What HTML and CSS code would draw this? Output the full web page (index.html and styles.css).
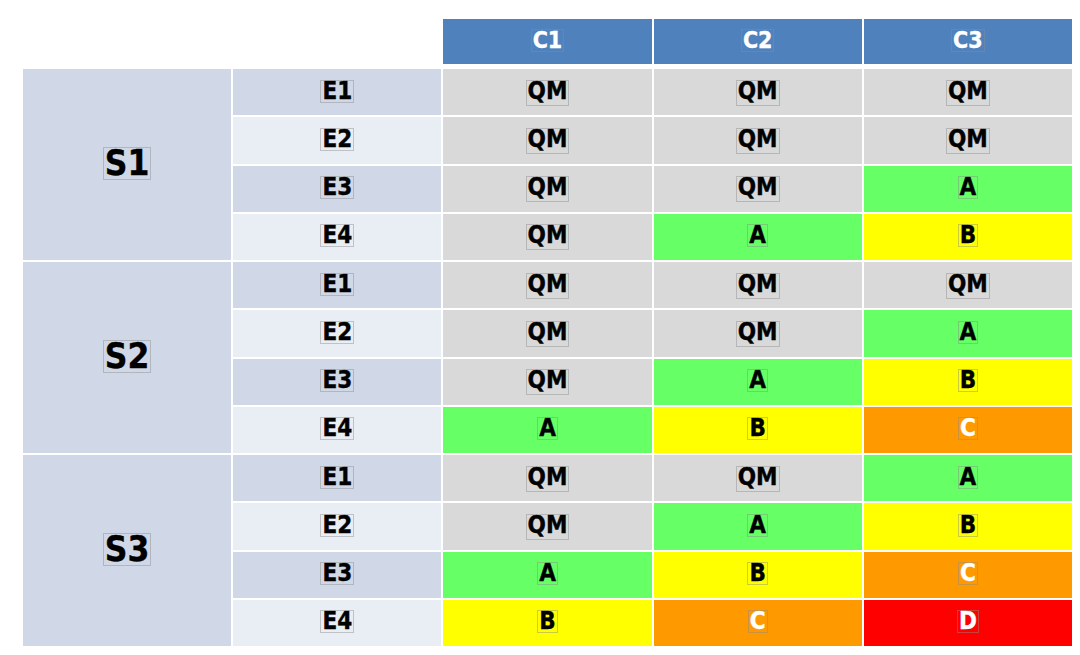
FILE: index.html
```html
<!DOCTYPE html>
<html>
<head>
<meta charset="utf-8">
<link rel="stylesheet" href="styles.css">
</head>
<body>
<div class="page">
  <div class="head">
    <div class="blank"></div>
    <div class="blank"></div>
    <div class="hc"><span class="t">C1</span></div>
    <div class="hc"><span class="t">C2</span></div>
    <div class="hc"><span class="t">C3</span></div>
  </div>
  <div class="grid">
    <div class="s"><span class="t">S1</span></div>
    <div class="e dk"><span class="t">E1</span></div>
    <div class="c qm"><span class="t q">QM</span></div>
    <div class="c qm"><span class="t q">QM</span></div>
    <div class="c qm"><span class="t q">QM</span></div>
    <div class="e lt"><span class="t">E2</span></div>
    <div class="c qm"><span class="t q">QM</span></div>
    <div class="c qm"><span class="t q">QM</span></div>
    <div class="c qm"><span class="t q">QM</span></div>
    <div class="e dk"><span class="t">E3</span></div>
    <div class="c qm"><span class="t q">QM</span></div>
    <div class="c qm"><span class="t q">QM</span></div>
    <div class="c ga"><span class="t">A</span></div>
    <div class="e lt"><span class="t">E4</span></div>
    <div class="c qm"><span class="t q">QM</span></div>
    <div class="c ga"><span class="t">A</span></div>
    <div class="c gb"><span class="t">B</span></div>

    <div class="s"><span class="t">S2</span></div>
    <div class="e dk"><span class="t">E1</span></div>
    <div class="c qm"><span class="t q">QM</span></div>
    <div class="c qm"><span class="t q">QM</span></div>
    <div class="c qm"><span class="t q">QM</span></div>
    <div class="e lt"><span class="t">E2</span></div>
    <div class="c qm"><span class="t q">QM</span></div>
    <div class="c qm"><span class="t q">QM</span></div>
    <div class="c ga"><span class="t">A</span></div>
    <div class="e dk"><span class="t">E3</span></div>
    <div class="c qm"><span class="t q">QM</span></div>
    <div class="c ga"><span class="t">A</span></div>
    <div class="c gb"><span class="t">B</span></div>
    <div class="e lt"><span class="t">E4</span></div>
    <div class="c ga"><span class="t">A</span></div>
    <div class="c gb"><span class="t">B</span></div>
    <div class="c gc"><span class="t">C</span></div>

    <div class="s"><span class="t">S3</span></div>
    <div class="e dk"><span class="t">E1</span></div>
    <div class="c qm"><span class="t q">QM</span></div>
    <div class="c qm"><span class="t q">QM</span></div>
    <div class="c ga"><span class="t">A</span></div>
    <div class="e lt"><span class="t">E2</span></div>
    <div class="c qm"><span class="t q">QM</span></div>
    <div class="c ga"><span class="t">A</span></div>
    <div class="c gb"><span class="t">B</span></div>
    <div class="e dk"><span class="t">E3</span></div>
    <div class="c ga"><span class="t">A</span></div>
    <div class="c gb"><span class="t">B</span></div>
    <div class="c gc"><span class="t">C</span></div>
    <div class="e lt"><span class="t">E4</span></div>
    <div class="c gb"><span class="t">B</span></div>
    <div class="c gc"><span class="t">C</span></div>
    <div class="c gd"><span class="t">D</span></div>
  </div>
</div>
</body>
</html>
```
FILE: styles.css
```css
html, body {
  margin: 0;
  padding: 0;
  background: #ffffff;
}

.page {
  padding: 19px 0 0 23px;
  font-family: "DejaVu Sans Condensed", "DejaVu Sans", Verdana, sans-serif;
  font-stretch: condensed;
  font-weight: bold;
  font-size: 24px;
  color: #000000;
}

.head,
.grid {
  width: 1049px;
  display: grid;
  grid-template-columns: repeat(5, 1fr);
  column-gap: 2px;
}

.head {
  height: 45px;
  margin-bottom: 5px;
}

.grid {
  height: 577px;
  grid-template-rows: repeat(12, 1fr);
  row-gap: 2px;
}

.head > div,
.grid > div {
  display: flex;
  align-items: center;
  justify-content: center;
}

.hc {
  background: #4f81bd;
  color: #ffffff;
  font-size: 23px;
}

.s {
  grid-row: span 4;
  background: #d0d8e8;
  font-size: 35px;
}

.e.dk { background: #d0d8e8; }
.e.lt { background: #e9edf4; }

.qm { background: #d9d9d9; }
.ga { background: #66ff66; }
.gb { background: #ffff00; }
.gc { background: #ff9900; color: #ffffff; }
.gd { background: #ff0000; color: #ffffff; }

.t {
  display: inline-block;
  line-height: 0.875em;
  height: 0.875em;
  padding: 0 1px;
  margin-bottom: 2px;
  outline: 1px solid rgba(140, 140, 140, 0.45);
  -webkit-text-stroke: 0.35px currentColor;
}

.t.q {
  padding-bottom: 3px;
  margin-bottom: -1px;
}
```
